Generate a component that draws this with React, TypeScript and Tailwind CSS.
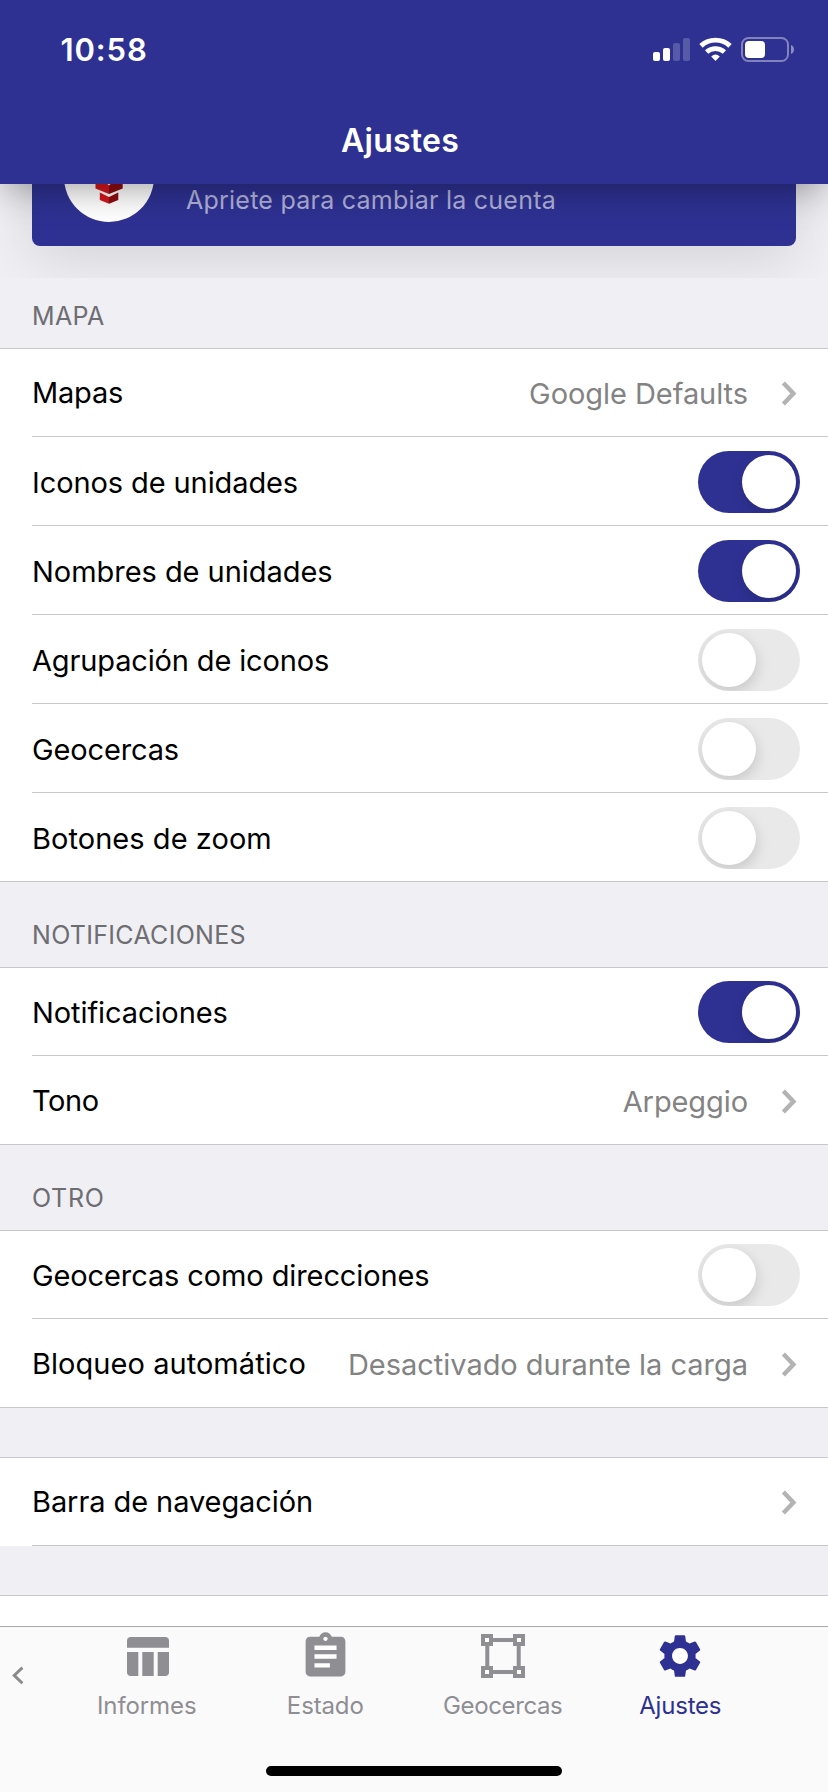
import type { ReactNode } from "react";

function Toggle({ on = false }: { on?: boolean }) {
  return (
    <div
      className={`-mt-[14px] ml-auto mr-7 flex h-[62px] w-[102px] shrink-0 overflow-hidden rounded-full p-1 ${
        on ? "justify-end bg-[#2e3192]" : "justify-start bg-[#e9e9e9]"
      }`}
    >
      <div className="size-[54px] rounded-full bg-white shadow-[1px_5px_14px_rgba(0,0,0,0.15)]" />
    </div>
  );
}

function Disclosure({ value, valueClass = "" }: { value?: string; valueClass?: string }) {
  return (
    <div className="ml-auto mr-[31px] flex items-start gap-[33px]">
      {value && <span className={`mt-px text-[#838383] ${valueClass}`}>{value}</span>}
      <svg className="mt-[5px] h-[27px] w-4" viewBox="0 0 16 27" fill="none" stroke="#b3b3b3" strokeWidth="4.4">
        <path d="M2.4 3 L12.4 13.5 L2.4 24" />
      </svg>
    </div>
  );
}

type RowProps = {
  label: string;
  className: string;
  labelClass?: string;
  last?: boolean;
  children: ReactNode;
};

function Row({ label, className, labelClass = "", last = false, children }: RowProps) {
  return (
    <div className={`bg-white pl-8 ${last ? "border-b border-[#c8c7cc]" : ""}`}>
      <div
        className={`flex items-start text-[29px] leading-[35px] text-black ${
          last ? "" : "border-b border-[#c8c7cc]"
        } ${className}`}
      >
        <span className={labelClass}>{label}</span>
        {children}
      </div>
    </div>
  );
}

function Heading({ children, className }: { children: string; className: string }) {
  return (
    <h2 className={`border-b border-[#c8c7cc] pl-8 text-[25px] leading-[30px] text-[#6d6d72] ${className}`}>
      {children}
    </h2>
  );
}

function Tab({
  icon,
  label,
  active = false,
  labelClass,
}: {
  icon: ReactNode;
  label: string;
  active?: boolean;
  labelClass: string;
}) {
  return (
    <div
      className={`flex w-[177.5px] flex-col items-center ${active ? "text-[#2e3192]" : "text-[#8e8e93]"}`}
    >
      <div className="flex h-16 w-full justify-center">{icon}</div>
      <span className={`text-[24px] leading-[29px] ${labelClass}`}>{label}</span>
    </div>
  );
}

function StatusIcons() {
  return (
    <div className="mr-[33px] mt-[36px] flex items-start">
      <svg className="h-[26px] w-[38px]" viewBox="0 0 38 26" fill="#fff">
        <rect x="0" y="16" width="7" height="9" rx="2" />
        <rect x="10" y="12" width="7" height="13" rx="2" />
        <rect x="20" y="7" width="7" height="18" rx="2" fillOpacity="0.2" />
        <rect x="30" y="2" width="7" height="23" rx="2" fillOpacity="0.2" />
      </svg>
      <svg className="ml-[8px] mt-px h-[25px] w-[33px]" viewBox="0 0 33 25" fill="none" stroke="#fff">
        <path d="M2 8.9 A21.2 21.2 0 0 1 31 8.9" strokeWidth="4.9" />
        <path d="M7.6 15 A13.2 13.2 0 0 1 25.4 15" strokeWidth="4.7" />
        <path d="M12.2 19.6 Q16.5 15.4 20.8 19.6 L16.5 24.1 Z" fill="#fff" stroke="none" />
      </svg>
      <svg className="ml-[8px] h-[27px] w-[55px]" viewBox="0 0 55 27" fill="none">
        <rect x="2" y="2" width="46" height="23" rx="6.5" stroke="#fff" strokeOpacity="0.4" strokeWidth="2" />
        <rect x="5" y="5" width="20" height="17" rx="4" fill="#fff" />
        <path d="M51 9 C55 10.5 55 16.5 51 18 Z" fill="#fff" fillOpacity="0.45" />
      </svg>
    </div>
  );
}

function AccountCard() {
  return (
    <div className="h-[94px] shrink-0 overflow-hidden">
      <div className="mx-8 -mt-[76px] flex h-[138px] items-start rounded-lg bg-[#2e3192] pl-8 pt-6 shadow-[0_12px_60px_rgba(0,0,0,0.12)]">
        <div className="size-[90px] shrink-0 overflow-hidden rounded-full bg-white">
          <svg className="size-[90px]" viewBox="64 132 90 90">
            <path d="M95.5 172 L109 180 V194 L95.5 188.6 Z" fill="#d4161c" />
            <path d="M122.7 172 L109 180 V194 L122.7 188.6 Z" fill="#8e0c12" />
            <path d="M105 182 L109 185.4 L113 182 Z" fill="#fff" />
            <path d="M99.8 192.6 L109 197 V203.8 L99.8 200 Z" fill="#d4161c" />
            <path d="M118.3 192.6 L109 197 V203.8 L118.3 200 Z" fill="#8e0c12" />
          </svg>
        </div>
        <p className="ml-[32px] mt-[53px] text-[25px] leading-[30px] tracking-[0.24px] text-[#b0b1d8]">
          Apriete para cambiar la cuenta
        </p>
      </div>
    </div>
  );
}

export default function App() {
  return (
    <div className="flex h-[1792px] w-[828px] flex-col overflow-hidden bg-[#efeff4] font-['Inter',sans-serif]">
      <header className="relative z-10 h-[184px] shrink-0 bg-[#2e3192] text-white shadow-[0_8px_36px_-6px_rgba(0,0,0,0.42)]">
        <div className="flex h-[121px] items-start justify-between">
          <span className="ml-[60.5px] mt-[31px] text-[31px] font-semibold leading-[37px] tracking-[0.89px]">
            10:58
          </span>
          <StatusIcons />
        </div>
        <h1 className="pl-[341px] text-[32px] font-semibold leading-[39px] tracking-[0.25px]">Ajustes</h1>
      </header>

      <main className="flex h-[1442px] shrink-0 flex-col overflow-hidden">
        <AccountCard />

        <Heading className="h-[71px] pt-[23px] tracking-[0.35px]">MAPA</Heading>
        <Row label="Mapas" className="h-[88px] pt-[26px]" labelClass="tracking-[-0.2px]">
          <Disclosure value="Google Defaults" valueClass="tracking-[-0.06px]" />
        </Row>
        <Row label="Iconos de unidades" className="h-[89px] pt-[28px]" labelClass="tracking-[-0.1px]">
          <Toggle on />
        </Row>
        <Row label="Nombres de unidades" className="h-[89px] pt-[28px]" labelClass="tracking-[-0.04px]">
          <Toggle on />
        </Row>
        <Row label="Agrupación de iconos" className="h-[89px] pt-[28px]" labelClass="tracking-[-0.15px]">
          <Toggle />
        </Row>
        <Row label="Geocercas" className="h-[89px] pt-[28px]" labelClass="tracking-[-0.15px]">
          <Toggle />
        </Row>
        <Row label="Botones de zoom" className="h-[88px] pt-[28px]" labelClass="tracking-[0.05px]" last>
          <Toggle />
        </Row>

        <Heading className="h-[86px] pt-[38px] tracking-[0.3px]">NOTIFICACIONES</Heading>
        <Row label="Notificaciones" className="h-[88px] pt-[27px]" labelClass="tracking-[-0.09px]">
          <Toggle on />
        </Row>
        <Row label="Tono" className="h-[88px] pt-[27px]" labelClass="tracking-[-0.45px]" last>
          <Disclosure value="Arpeggio" valueClass="tracking-[-0.09px]" />
        </Row>

        <Heading className="h-[86px] pt-[38px] tracking-[0.7px]">OTRO</Heading>
        <Row label="Geocercas como direcciones" className="h-[88px] pt-[27px]" labelClass="tracking-[-0.11px]">
          <Toggle />
        </Row>
        <Row label="Bloqueo automático" className="h-[88px] pt-[27px]" labelClass="tracking-[0.05px]" last>
          <Disclosure value="Desactivado durante la carga" valueClass="tracking-[-0.03px]" />
        </Row>

        <div className="h-[50px] shrink-0 border-b border-[#c8c7cc]" />
        <Row label="Barra de navegación" className="h-[88px] pt-[26px]" labelClass="tracking-[-0.08px]">
          <Disclosure />
        </Row>
        <div className="h-[50px] shrink-0 border-b border-[#c8c7cc]" />
        <div className="h-[30px] shrink-0 bg-white" />
      </main>

      <nav className="flex h-[166px] shrink-0 flex-col border-t border-[#a9a9ad] bg-[#fafafa]">
        <div className="flex h-[139px] items-start">
          <div className="w-[59px] pl-[11px] pt-[39px]">
            <svg className="h-[19px] w-[14px]" viewBox="0 0 14 19" fill="none" stroke="#8a8a8d" strokeWidth="2.9">
              <path d="M11.4 1.6 L3.2 9.4 L11.4 17.2" />
            </svg>
          </div>
          <Tab
            label="Informes"
            labelClass="mr-[2px] tracking-[-0.11px]"
            icon={
              <svg className="mt-[10px] h-[39px] w-[42px]" viewBox="0 0 42 39" fill="currentColor">
                <path d="M4 0 H38 Q42 0 42 4 V10.7 H0 V4 Q0 0 4 0 Z" />
                <path d="M0 15 H11.3 V39 H4 Q0 39 0 35 Z" />
                <path d="M15.3 15 H26.7 V39 H15.3 Z" />
                <path d="M30.7 15 H42 V35 Q42 39 38 39 H30.7 Z" />
              </svg>
            }
          />
          <Tab
            label="Estado"
            labelClass="tracking-[-0.14px]"
            icon={
              <svg className="mt-[3px] size-[53px]" viewBox="0 0 24 24" fill="currentColor">
                <path d="M6 6h12v12H6z" fill="#fff" />
                <circle cx="12" cy="4" r="1.5" fill="#fff" />
                <path d="M19 3h-4.18C14.4 1.84 13.3 1 12 1c-1.3 0-2.4.84-2.82 2H5c-1.1 0-2 .9-2 2v14c0 1.1.9 2 2 2h14c1.1 0 2-.9 2-2V5c0-1.1-.9-2-2-2zm-7 0c.55 0 1 .45 1 1s-.45 1-1 1-1-.45-1-1 .45-1 1-1zm2 14H7v-2h7v2zm3-4H7v-2h10v2zm0-4H7V7h10v2z" />
              </svg>
            }
          />
          <Tab
            label="Geocercas"
            labelClass="tracking-[-0.38px]"
            icon={
              <svg className="mt-[7px] size-11" viewBox="0 0 44 44" fill="none" stroke="currentColor" strokeWidth="4">
                <rect x="2" y="2" width="8" height="8" fill="#fff" />
                <rect x="34" y="2" width="8" height="8" fill="#fff" />
                <rect x="2" y="34" width="8" height="8" fill="#fff" />
                <rect x="34" y="34" width="8" height="8" fill="#fff" />
                <path d="M12 6 H32 M12 38 H32 M6.3 12 V32 M37.7 12 V32" />
              </svg>
            }
          />
          <Tab
            active
            label="Ajustes"
            labelClass="tracking-[-0.19px]"
            icon={
              <svg className="mt-[4px] size-[50px]" viewBox="0 0 24 24" fill="currentColor">
                <circle cx="12" cy="12" r="4" fill="#fff" />
                <path d="M19.43 12.98c.04-.32.07-.64.07-.98s-.03-.66-.07-.98l2.11-1.65c.19-.15.24-.42.12-.64l-2-3.46c-.12-.22-.39-.3-.61-.22l-2.49 1c-.52-.4-1.08-.73-1.69-.98l-.38-2.65C14.46 2.18 14.25 2 14 2h-4c-.25 0-.46.18-.49.42l-.38 2.65c-.61.25-1.17.59-1.69.98l-2.49-1c-.23-.09-.49 0-.61.22l-2 3.46c-.13.22-.07.49.12.64l2.11 1.65c-.04.32-.07.65-.07.98s.03.66.07.98l-2.11 1.65c-.19.15-.24.42-.12.64l2 3.46c.12.22.39.3.61.22l2.49-1c.52.4 1.08.73 1.69.98l.38 2.65c.03.24.24.42.49.42h4c.25 0 .46-.18.49-.42l.38-2.65c.61-.25 1.17-.59 1.69-.98l2.49 1c.23.09.49 0 .61-.22l2-3.46c.12-.22.07-.49-.12-.64l-2.11-1.65zM12 15.8c-2.1 0-3.8-1.7-3.8-3.8s1.7-3.8 3.8-3.8 3.8 1.7 3.8 3.8-1.7 3.8-3.8 3.8z" />
              </svg>
            }
          />
        </div>
        <div className="ml-[266px] h-[10px] w-[296px] rounded-full bg-black" />
      </nav>
    </div>
  );
}
